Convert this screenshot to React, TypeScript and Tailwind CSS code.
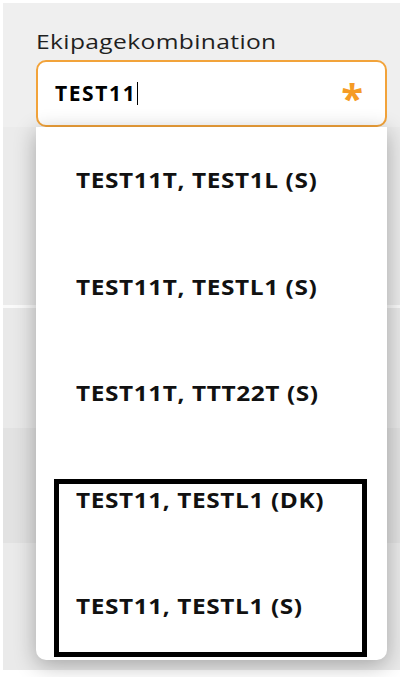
import React from 'react';

const App = () => {
  const options = [
    'TEST11T, TEST1L (S)',
    'TEST11T, TESTL1 (S)',
    'TEST11T, TTT22T (S)',
    'TEST11, TESTL1 (DK)',
    'TEST11, TESTL1 (S)'
  ];

  return (
    <div
      className="relative w-[400px] h-[677px] overflow-hidden bg-white"
      style={{ fontFamily: '"Open Sans", "Liberation Sans", sans-serif' }}
    >
      {/* Page behind */}
      <div className="absolute left-[3px] top-[3px] right-0 bottom-[7px] bg-[#efefef] flex flex-col">
        <div className="h-[124px]" />
        <div className="h-[178px] bg-[#ebebeb]" />
        <div className="h-[3px] bg-[#fafafa]" />
        <div className="h-[120px] bg-[#e9e9e9]" />
        <div className="h-[115px] bg-[#e2e2e2]" />
        <div className="flex-1 bg-[#eaeaea]" />
      </div>

      <div className="relative pt-[28px] pl-[36px] pr-[13px]">
        <div className="h-[27px]">
          <span className="inline-block origin-left scale-x-[1.2] text-[20.5px] leading-[27px] tracking-[0.3px] text-[#1f1f1f]">
            Ekipagekombination
          </span>
        </div>
        <div className="mt-[5px] h-[67px] rounded-[10px] border-2 border-[#f2a33a] bg-white flex items-center pl-[17px] pr-[22px]">
          <span className="text-[21px] font-bold tracking-[1.6px] text-black">TEST11</span>
          <span className="ml-[1px] w-[1px] h-[23px] bg-black" />
          <span className="ml-auto text-[40px] leading-none font-bold text-[#f59b24] mt-[9px]">*</span>
        </div>
      </div>

      {/* Dropdown */}
      <div className="absolute left-[36px] top-[127px] w-[351px] h-[533px] bg-white rounded-b-[10px] shadow-[0_5px_22px_rgba(0,0,0,0.3)] flex flex-col">
        {options.map((opt, i) => (
          <div key={i} className="flex-1 flex items-center pl-[40px]">
            <span className="inline-block origin-left scale-x-[1.19] text-[20.5px] font-bold tracking-[0.5px] text-[#111]">
              {opt}
            </span>
          </div>
        ))}
      </div>

      {/* Highlight box */}
      <div className="absolute left-[54px] top-[479px] w-[313px] h-[178px] border-[5px] border-black" />
    </div>
  );
};

export default App;
